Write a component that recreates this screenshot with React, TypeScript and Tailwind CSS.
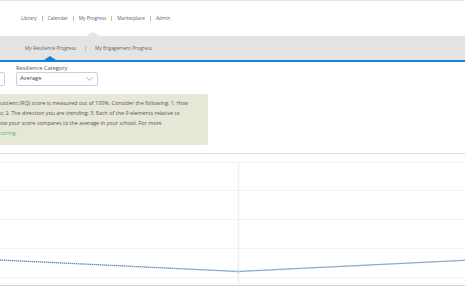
const font = { fontFamily: '"Open Sans", "Noto Sans", Arial, sans-serif' }

const topNav = ['Library', 'Calendar', 'My Progress', 'Marketplace', 'Admin']

const Sep = () => <span className="w-px h-[5px] bg-[#a8d672]" />

const ResilienceChart = () => {
    const grid = [9, 37, 66, 95, 124]
    return (
        <svg width="465" height="134" viewBox="0 0 465 134" className="block">
            <line x1="0" y1="0.5" x2="465" y2="0.5" stroke="#d9d9d9" strokeWidth="1" />
            {grid.map((y) => (
                <line key={y} x1="0" y1={y + 0.5} x2="465" y2={y + 0.5} stroke="#f2f2f2" strokeWidth="1" />
            ))}
            <line x1="238.5" y1="9" x2="238.5" y2="133" stroke="#efefef" strokeWidth="1.5" />
            <line x1="0" y1="132.5" x2="465" y2="132.5" stroke="#d4d4d4" strokeWidth="1" />
            <polyline points="0,107 238,118.5 465,107.3" fill="none" stroke="#ccd8e4" strokeWidth="1.6" />
            <polyline points="0,107 238,118.5 465,107.3" fill="none" stroke="#3d6fa6" strokeWidth="0.9" strokeDasharray="1 1" />
            <circle cx="238" cy="118.5" r="1.3" fill="#b8c8da" />
        </svg>
    )
}

export default function App() {
    return (
        <div className="w-[465px] h-[287px] overflow-hidden bg-white text-[#666]" style={font}>
            <div className="h-px bg-[#e6e6e6]" />
            <header className="h-[35px] flex items-center gap-[5px] pl-[21px] text-[4.8px] leading-none">
                {topNav.map((item, i) => (
                    <div key={item} className="flex items-center gap-[5px]">
                        {i > 0 && <Sep />}
                        <span>{item}</span>
                    </div>
                ))}
            </header>
            <div className="relative h-[24px] bg-[#e4e4e4] flex items-center gap-[9px] pl-[25px] text-[4.8px] leading-none">
                <span className="absolute left-[86px] -top-[4px] w-0 h-0 border-l-[7px] border-r-[7px] border-b-[4px] border-l-transparent border-r-transparent border-b-[#e4e4e4]" />
                <span>My Resilience Progress</span>
                <Sep />
                <span>My Engagement Progress</span>
                <span className="absolute left-[44px] bottom-0 w-0 h-0 border-l-[6px] border-r-[6px] border-b-[4px] border-l-transparent border-r-transparent border-b-[#1b80d2]" />
            </div>
            <div className="h-[2px] bg-[#1b80d2]" />

            <div className="pt-[3px]">
                <div className="flex items-end gap-[11px] -ml-[60px]">
                    <div className="w-[65px] h-[14px] border border-[#cfcfcf] rounded-[2px] bg-white" />
                    <div className="flex flex-col">
                        <span className="text-[5.7px] leading-[7px] text-[#555]">Resilience Category</span>
                        <div className="w-[82px] h-[14px] border border-[#cfcfcf] rounded-[2px] bg-white flex items-center justify-between pl-[3px] pr-[4px]">
                            <span className="text-[5.7px] leading-none text-[#444]">Average</span>
                            <svg width="7" height="4" viewBox="0 0 7 4">
                                <path d="M0.5 0.5 L3.5 3.2 L6.5 0.5" fill="none" stroke="#888" strokeWidth="0.7" />
                            </svg>
                        </div>
                    </div>
                </div>

                <div className="mt-[8px] w-[208px] h-[51px] bg-[#e7e7d7] rounded-r-[2px] overflow-hidden pt-[4px] text-[5.4px] leading-[10px] text-[#555] whitespace-nowrap">
                    <div>uotient (RQ) score is measured out of 100%. Consider the following: 1. How</div>
                    <div>s; 2. The direction you are trending; 3. Each of the 9 elements relative to</div>
                    <div>ow your score compares to the average in your school. For more</div>
                    <div className="text-[#5cb85c]">coring.</div>
                </div>

                <div className="mt-[8px]">
                    <ResilienceChart />
                </div>
            </div>
        </div>
    )
}
